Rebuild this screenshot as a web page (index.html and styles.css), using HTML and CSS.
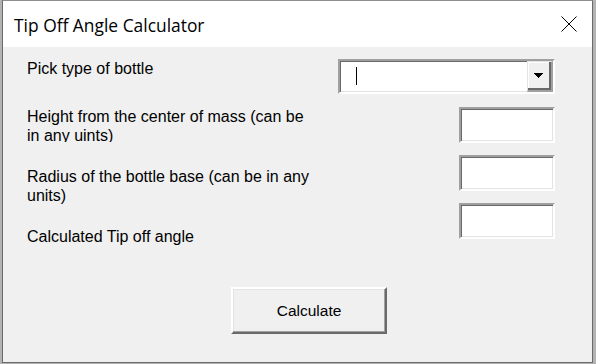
FILE: index.html
```html
<!DOCTYPE html>
<html>
<head>
<meta charset="utf-8">
<title>Tip Off Angle Calculator</title>
<link rel="stylesheet" href="styles.css">
</head>
<body>
<div class="window">
  <div class="titlebar">
    <span class="title">Tip Off Angle Calculator</span>
    <svg class="close" width="16" height="16" viewBox="0 0 16 16">
      <path d="M0.5 0.5 L15.5 15.5 M15.5 0.5 L0.5 15.5" stroke="#000" stroke-width="1" fill="none"/>
    </svg>
  </div>
  <div class="client">
    <div class="form">
      <div class="labels">
        <div class="label label-pick">Pick type of bottle</div>
        <div class="label label-height">Height from the center of mass (can be in any uints)</div>
        <div class="label label-radius">Radius of the bottle base (can be in any units)</div>
        <div class="label label-angle">Calculated Tip off angle</div>
      </div>
      <div class="controls">
        <div class="combo">
          <div class="combo-text"><span class="caret"></span></div>
          <div class="combo-btn">
            <svg width="9" height="5" viewBox="0 0 9 5" shape-rendering="crispEdges"><polygon points="0,0 9,0 4.5,5" fill="#000"/></svg>
          </div>
        </div>
        <div class="textbox tb-first"></div>
        <div class="textbox"></div>
        <div class="textbox"></div>
      </div>
    </div>
    <div class="actions">
      <button class="cmd">Calculate</button>
    </div>
  </div>
</div>
</body>
</html>
```

FILE: styles.css
```css
html, body {
  margin: 0;
  padding: 0;
}
body {
  width: 596px;
  height: 364px;
  overflow: hidden;
  background: #b3b3b3;
}
.window {
  margin-left: 2px;
  width: 591px;
  height: 363px;
  box-sizing: border-box;
  border: 1px solid #6a6a6a;
  border-top-color: #8e8e8e;
  background: #f0f0f0;
  display: flex;
  flex-direction: column;
}
.titlebar {
  height: 46px;
  flex: 0 0 46px;
  background: #fff;
  display: flex;
  align-items: center;
  justify-content: space-between;
  padding: 0 15px 0 11px;
}
.title {
  font-family: "Open Sans", "Noto Sans", sans-serif;
  font-size: 17.4px;
  color: #000;
  padding-top: 2px;
}
.close {
  display: block;
}
.client {
  flex: 1;
  display: flex;
  flex-direction: column;
  font-family: "Liberation Sans", Arial, sans-serif;
  font-size: 16px;
  color: #000;
}
.form {
  display: flex;
  justify-content: space-between;
  align-items: flex-start;
  padding: 0 37px 0 24px;
}
.labels {
  display: flex;
  flex-direction: column;
  width: 290px;
}
.label {
  line-height: 18.5px;
}
.label-pick {
  margin-top: 13.2px;
}
.label-height {
  margin-top: 29.8px;
  height: 34px;
  overflow: hidden;
}
.label-radius {
  margin-top: 26px;
}
.label-angle {
  margin-top: 22.4px;
}
.controls {
  display: flex;
  flex-direction: column;
  align-items: flex-end;
  gap: 12px;
  margin-top: 12px;
}
.combo {
  width: 217px;
  height: 35px;
  box-sizing: border-box;
  border: 2px solid;
  border-color: #a0a0a0 #fff #fff #a0a0a0;
  box-shadow: inset 1px 1px 0 #696969, inset -1px -1px 0 #e3e3e3;
  background: #fff;
  display: flex;
}
.combo-text {
  flex: 1;
  display: flex;
  align-items: center;
}
.caret {
  width: 1px;
  height: 18px;
  margin-left: 16px;
  margin-top: -1px;
  background: #000;
}
.combo-btn {
  width: 26px;
  box-sizing: border-box;
  background: #f0f0f0;
  border-style: solid;
  border-width: 1px 2px 2px 1px;
  border-color: #e3e3e3 #a0a0a0 #a0a0a0 #e3e3e3;
  box-shadow: inset -2px -2px 0 #696969, inset 1px 1px 0 #fff;
  display: flex;
  align-items: center;
  justify-content: center;
  padding: 0 2px 1px 0;
}
.combo-btn svg {
  display: block;
}
.textbox {
  width: 96px;
  height: 36px;
  box-sizing: border-box;
  border: 2px solid;
  border-color: #a0a0a0 #fff #fff #a0a0a0;
  box-shadow: inset 1px 1px 0 #696969, inset -1px -1px 0 #e3e3e3;
  background: #fff;
}
.tb-first {
  margin-top: 1px;
}
.actions {
  display: flex;
  padding-left: 228px;
  margin-top: 40.6px;
}
.cmd {
  width: 156px;
  height: 47px;
  box-sizing: border-box;
  margin: 0;
  padding: 1px 0 0 0;
  background: #f0f0f0;
  border-style: solid;
  border-width: 2px;
  border-color: #fff #6a6a6a #6a6a6a #fff;
  box-shadow: inset -1px -1px 0 #a0a0a0, inset 1px 1px 0 #e3e3e3;
  font-family: "Liberation Sans", Arial, sans-serif;
  font-size: 15.5px;
  color: #000;
}
```
